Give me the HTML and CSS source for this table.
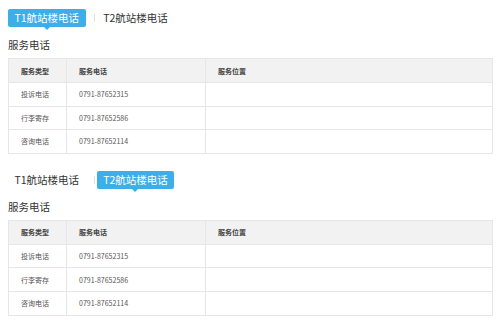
FILE: index.html
```html
<!DOCTYPE html>
<html lang="zh-CN">
<head>
<meta charset="utf-8">
<link rel="stylesheet" href="styles.css">
</head>
<body>
<div class="section">
  <div class="tabs">
    <span class="tab active">T1航站楼电话</span>
    <span class="sep"></span>
    <span class="tab">T2航站楼电话</span>
  </div>
  <h3 class="title">服务电话</h3>
  <table class="tbl">
    <colgroup><col class="c1"><col class="c2"><col></colgroup>
    <tr><th>服务类型</th><th>服务电话</th><th>服务位置</th></tr>
    <tr><td>投诉电话</td><td>0791-87652315</td><td></td></tr>
    <tr><td>行李寄存</td><td>0791-87652586</td><td></td></tr>
    <tr><td>咨询电话</td><td>0791-87652114</td><td></td></tr>
  </table>
</div>
<div class="section second">
  <div class="tabs">
    <span class="tab">T1航站楼电话</span>
    <span class="sep"></span>
    <span class="tab active">T2航站楼电话</span>
  </div>
  <h3 class="title">服务电话</h3>
  <table class="tbl">
    <colgroup><col class="c1"><col class="c2"><col></colgroup>
    <tr><th>服务类型</th><th>服务电话</th><th>服务位置</th></tr>
    <tr><td>投诉电话</td><td>0791-87652315</td><td></td></tr>
    <tr><td>行李寄存</td><td>0791-87652586</td><td></td></tr>
    <tr><td>咨询电话</td><td>0791-87652114</td><td></td></tr>
  </table>
</div>
</body>
</html>
```
FILE: styles.css
```css
html, body { margin: 0; padding: 0; background: #fff; }
body {
  padding: 9px 7px 0 8px;
  font-family: "Noto Sans CJK SC", "Noto Sans", sans-serif;
  color: #333;
}
.section.second { margin-top: 17px; }
.tabs {
  display: flex;
  align-items: center;
  height: 18px;
}
.tab {
  position: relative;
  display: block;
  height: 18px;
  line-height: 18px;
  padding: 0 6.5px;
  font-size: 10.5px;
  color: #333;
  border-radius: 2px;
  white-space: nowrap;
}
.tab.active {
  background: #3eaee9;
  color: #fff;
}
.tab.active::after {
  content: "";
  position: absolute;
  left: 50%;
  bottom: -3px;
  margin-left: -3px;
  border-left: 3px solid transparent;
  border-right: 3px solid transparent;
  border-top: 3px solid #3eaee9;
}
.sep {
  display: block;
  width: 1px;
  height: 8px;
  background: #e2e2e2;
  margin: 0 2px 0 8px;
}
.title {
  margin: 10px 0 5px 0;
  height: 16px;
  line-height: 16px;
  font-size: 10.5px;
  font-weight: normal;
  color: #333;
}
.tbl {
  width: 100%;
  border-collapse: collapse;
  table-layout: fixed;
  border: 1px solid #e6e6e6;
  font-size: 7px;
}
.tbl .c1 { width: 58px; }
.tbl .c2 { width: 139px; }
.tbl th, .tbl td {
  border: 1px solid #e6e6e6;
  text-align: left;
  padding: 0 0 0 12px;
  white-space: nowrap;
}
.tbl th {
  height: 23px;
  background: #f2f2f2;
  font-weight: bold;
  color: #444;
}
.tbl td {
  height: 22.6px;
  color: #555;
}
```
